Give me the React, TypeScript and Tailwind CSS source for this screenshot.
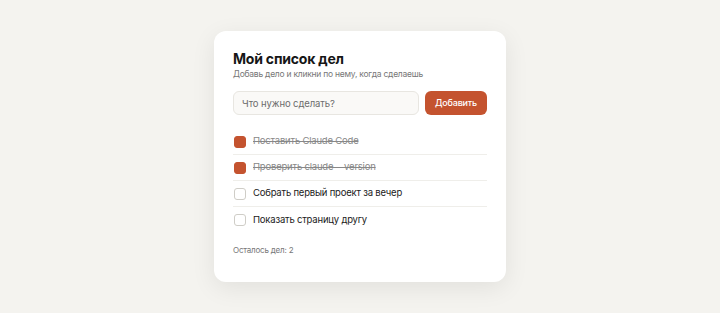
import { useState } from "react";

type Todo = { id: number; text: string; done: boolean };

const initial: Todo[] = [
  { id: 1, text: "Поставить Claude Code", done: true },
  { id: 2, text: "Проверить claude --version", done: true },
  { id: 3, text: "Собрать первый проект за вечер", done: false },
  { id: 4, text: "Показать страницу другу", done: false },
];

export default function App() {
  const [todos, setTodos] = useState<Todo[]>(initial);
  const [draft, setDraft] = useState("");

  function addTodo() {
    const text = draft.trim();
    if (!text) return;
    setTodos([...todos, { id: Date.now(), text, done: false }]);
    setDraft("");
  }

  function toggle(id: number) {
    setTodos(todos.map((t) => (t.id === id ? { ...t, done: !t.done } : t)));
  }

  const left = todos.filter((t) => !t.done).length;

  return (
    <div
      className="flex min-h-screen justify-center bg-[#f4f3ef] pt-[31px]"
      style={{ fontFamily: "Inter, 'Liberation Sans', sans-serif" }}
    >
      <div className="h-[251px] w-[292px] rounded-[12px] bg-white px-[19px] pt-[19px] shadow-[0_6px_24px_rgba(0,0,0,0.08)]">
        <h1 className="text-[14px] font-bold leading-[18px] tracking-[-0.2px] text-[#161616]">Мой список дел</h1>
        <p className="mt-px text-[8.5px] leading-[11px] tracking-[-0.25px] text-[#777]">
          Добавь дело и кликни по нему, когда сделаешь
        </p>

        <div className="mt-[11px] flex gap-[6px]">
          <input
            value={draft}
            onChange={(e) => setDraft(e.target.value)}
            onKeyDown={(e) => e.key === "Enter" && addTodo()}
            placeholder="Что нужно сделать?"
            className="h-[24px] flex-1 rounded-[6px] border border-[#e8e6e1] bg-[#faf9f7] px-[8px] text-[9.5px] tracking-[-0.1px] text-[#333] outline-none placeholder:text-[#6c6c6c]"
          />
          <button
            onClick={addTodo}
            className="h-[24px] w-[62px] rounded-[6px] bg-[#c4532f] text-[9px] font-medium tracking-[-0.2px] text-white"
          >
            Добавить
          </button>
        </div>

        <ul className="mt-[14px]">
          {todos.map((t, i) => (
            <li
              key={t.id}
              onClick={() => toggle(t.id)}
              className={
                "flex h-[26px] cursor-pointer items-center gap-[7px] pl-px " +
                (i < todos.length - 1 ? "border-b border-[#efeeea]" : "")
              }
            >
              <span
                className={
                  "h-[12px] w-[12px] shrink-0 rounded-[3px] border " +
                  (t.done ? "border-[#c4532f] bg-[#c4532f]" : "border-[#cfcdc7] bg-white")
                }
              />
              <span
                className={
                  "text-[9.5px] tracking-[-0.2px] " +
                  (t.done ? "text-[#888] line-through" : "text-[#1a1a1a]")
                }
              >
                {t.text}
              </span>
            </li>
          ))}
        </ul>

        <p className="mt-[11px] text-[8px] leading-[12px] tracking-[-0.2px] text-[#777]">
          Осталось дел: {left}
        </p>
      </div>
    </div>
  );
}
